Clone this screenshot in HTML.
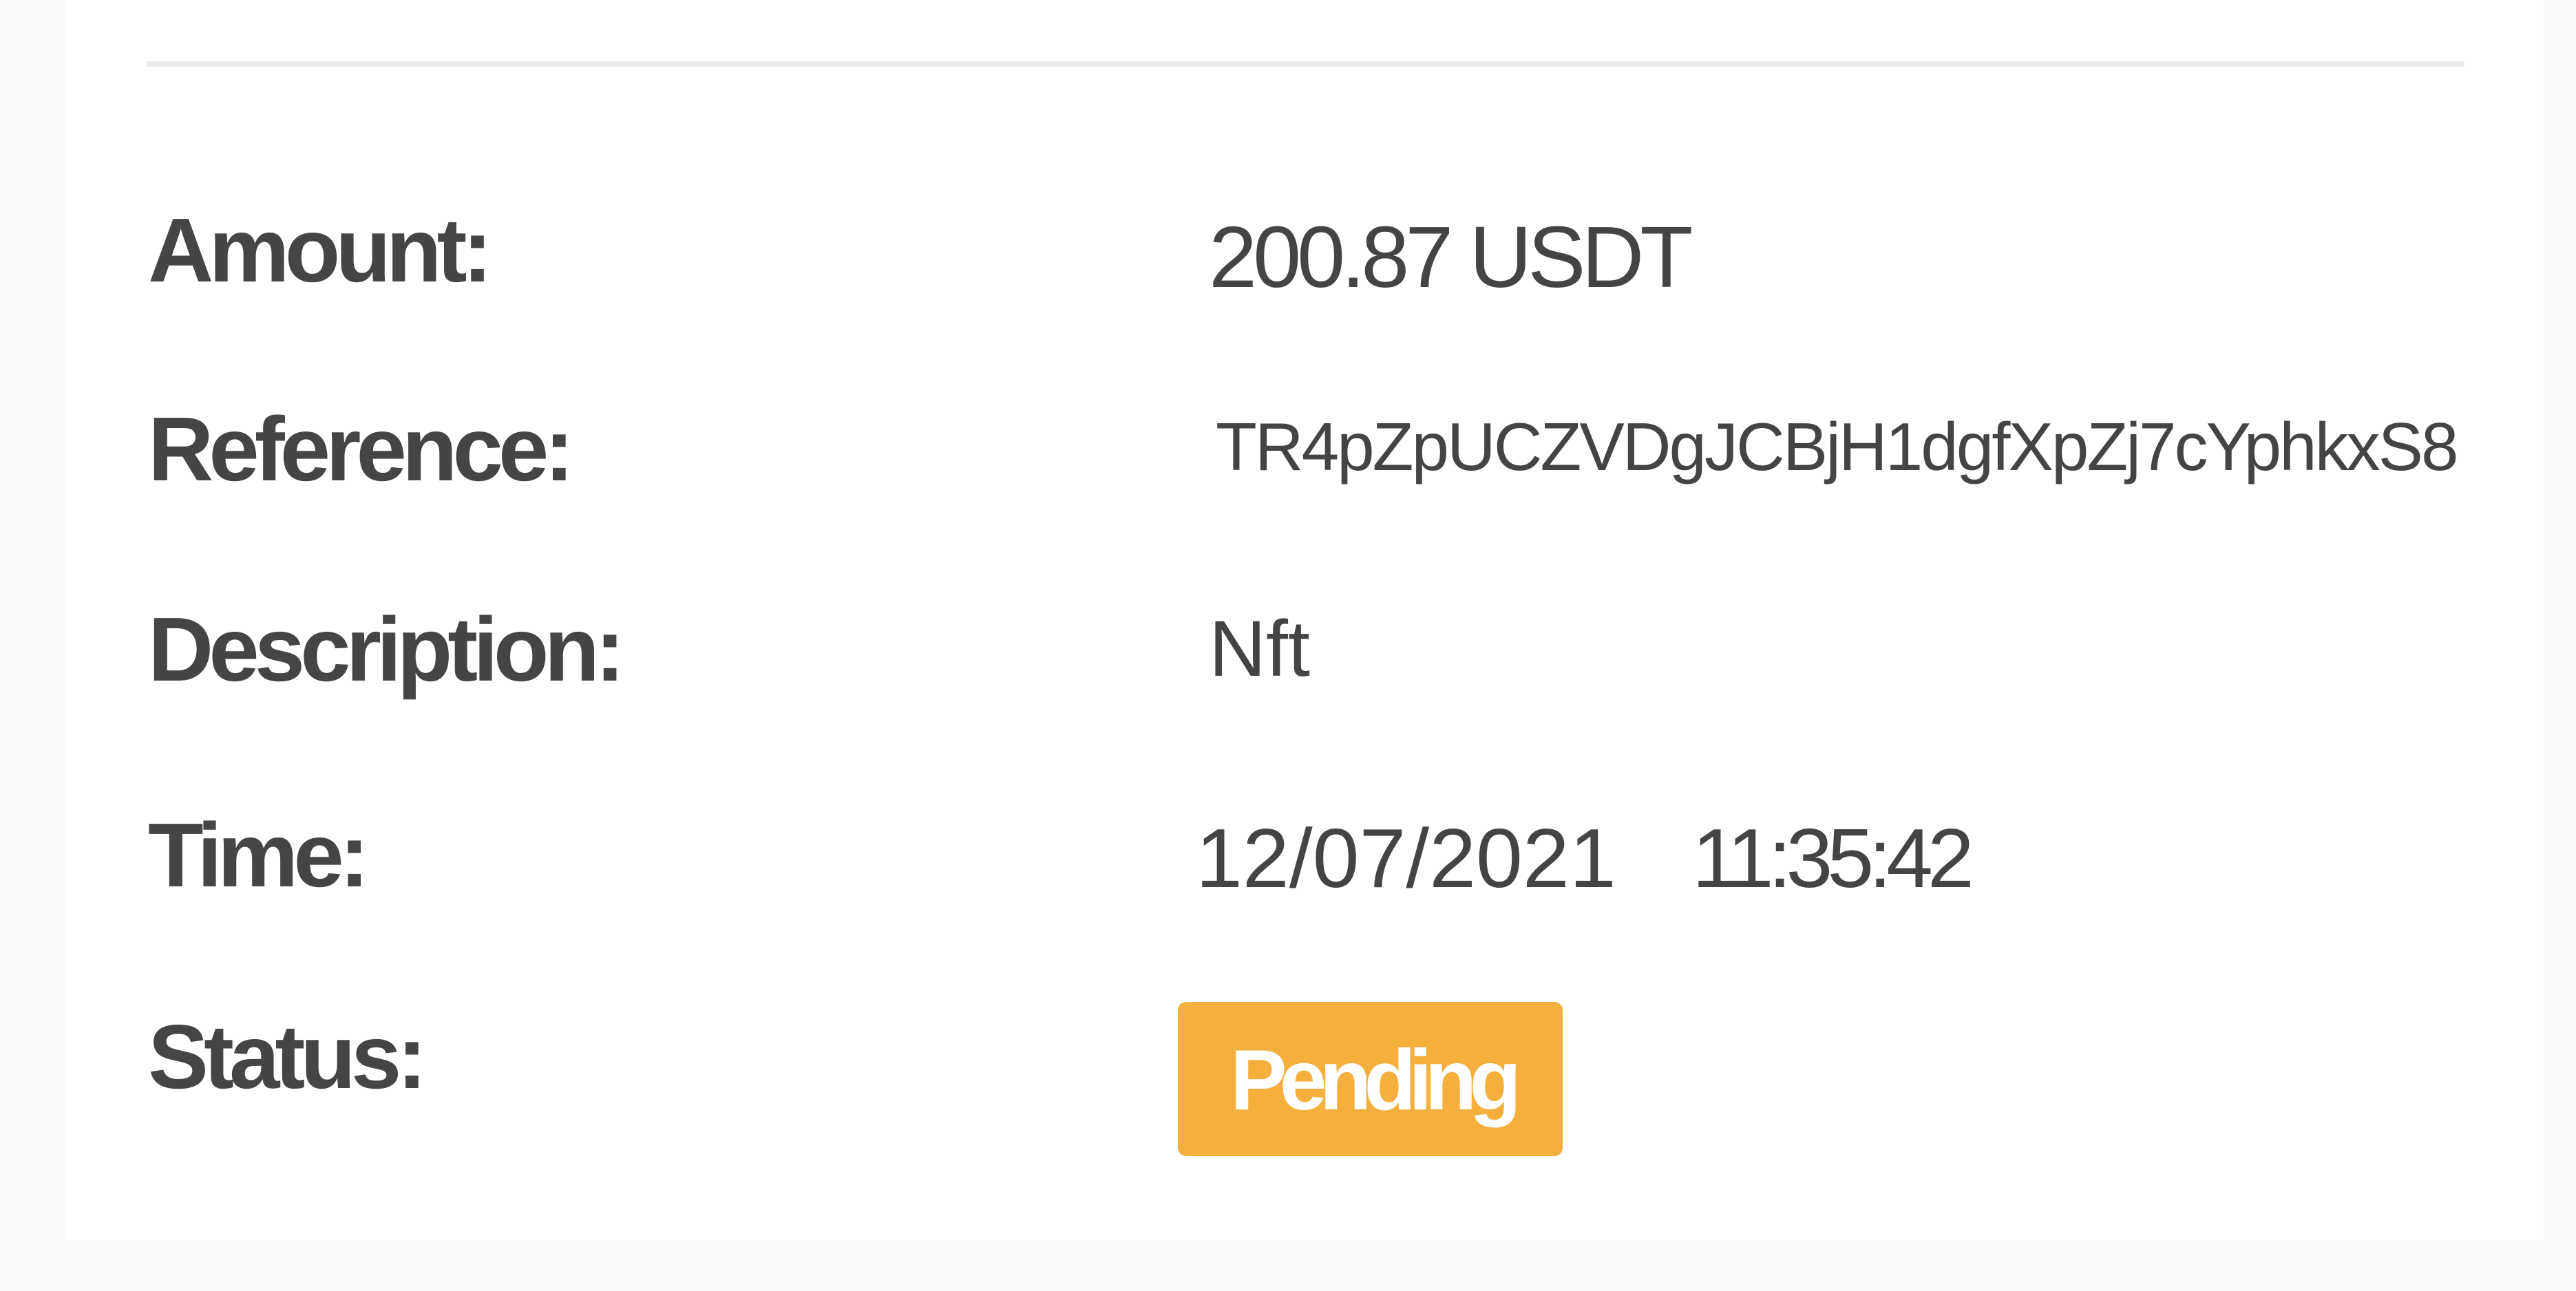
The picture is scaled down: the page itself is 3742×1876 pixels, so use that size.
<!DOCTYPE html>
<html><head><meta charset="utf-8"><style>
html,body{margin:0;padding:0}
body{width:3742px;height:1876px;background:#f9f9f9;position:relative;overflow:hidden;font-family:"Liberation Sans",Arial,sans-serif;color:#454545}
.card{position:absolute;left:95px;top:0;width:3600px;height:1802px;background:#fff}
.hr{position:absolute;left:212px;top:89px;width:3368px;height:8px;background:#ececf0}
.l{position:absolute;left:215px;font-size:132px;font-weight:bold;line-height:1;letter-spacing:-7px;white-space:nowrap}
.v{position:absolute;line-height:1;white-space:nowrap;color:#444}
.badge{position:absolute;left:1711px;top:1456px;width:559px;height:224px;background:#f4af3d;border-radius:12px}
.bt{position:absolute;left:1787px;top:1508px;font-size:124px;font-weight:bold;color:#fff;line-height:1;letter-spacing:-11px}
</style></head><body>
<div class="card"></div>
<div class="hr"></div>
<div class="l" style="top:298px">Amount:</div>
<div class="l" style="top:587px">Reference:</div>
<div class="l" style="top:878px">Description:</div>
<div class="l" style="top:1177px">Time:</div>
<div class="l" style="top:1470px">Status:</div>
<div class="v" style="left:1756px;top:311px;font-size:126px;letter-spacing:-6px">200.87 USDT</div>
<div class="v" style="left:1766px;top:600px;font-size:98px;letter-spacing:-3px">TR4pZpUCZVDgJCBjH1dgfXpZj7cYphkxS8</div>
<div class="v" style="left:1756px;top:886px;font-size:115px">Nft</div>
<div class="v" style="left:1737px;top:1186px;font-size:122px">12/07/2021</div>
<div class="v" style="left:2458px;top:1186px;font-size:122px;letter-spacing:-8px">11:35:42</div>
<div class="badge"></div>
<div class="bt">Pending</div>
</body></html>
